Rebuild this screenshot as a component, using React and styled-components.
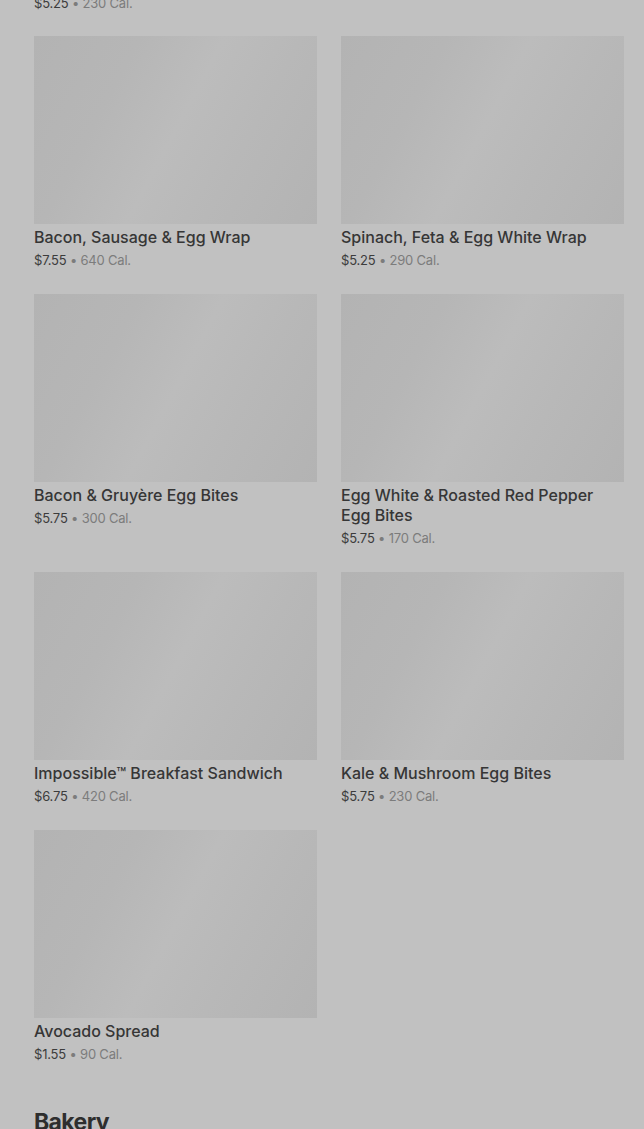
import React from "react";
import styled, { createGlobalStyle } from "styled-components";

const Global = createGlobalStyle`
  html, body { margin: 0; padding: 0; background: #c1c1c1; }
  body { font-family: Inter, "Noto Sans", sans-serif; overflow: hidden; }
`;

const Page = styled.main`
  padding: 0 20px 0 34px;
  width: 644px;
  height: 1129px;
  box-sizing: border-box;
  overflow: hidden;
`;

const Tail = styled.div`
  margin-top: -10px;
  margin-bottom: 23px;
`;

const Grid = styled.div`
  display: grid;
  grid-template-columns: 283px 283px;
  column-gap: 24px;
  row-gap: 24px;
  align-items: start;
`;

const Card = styled.article`
  display: flex;
  flex-direction: column;
`;

const Thumb = styled.div`
  height: 188px;
  background: linear-gradient(
    118deg,
    #b3b3b3 0%,
    #b6b6b6 28%,
    #bcbcbc 50%,
    #b8b8b8 70%,
    #b3b3b3 100%
  );
`;

const Title = styled.h3`
  margin: 3px 0 0;
  font-size: 16px;
  line-height: 20px;
  font-weight: 500;
  color: #363636;
`;

const Meta = styled.div`
  margin-top: 3px;
  font-size: 13px;
  line-height: 20px;
  color: #3c3c3c;
  letter-spacing: -0.2px;
`;

const Cal = styled.span`
  color: #7c7c7c;
`;

const Heading = styled.h2`
  margin: 42px 0 0;
  font-size: 23px;
  line-height: 32px;
  font-weight: 700;
  color: #2e2e2e;
  letter-spacing: -0.6px;
`;

const items = [
  { name: "Bacon, Sausage & Egg Wrap", price: "$7.55", cal: "640 Cal." },
  { name: "Spinach, Feta & Egg White Wrap", price: "$5.25", cal: "290 Cal." },
  { name: "Bacon & Gruyère Egg Bites", price: "$5.75", cal: "300 Cal." },
  { name: "Egg White & Roasted Red Pepper Egg Bites", price: "$5.75", cal: "170 Cal." },
  { name: "Impossible™ Breakfast Sandwich", price: "$6.75", cal: "420 Cal." },
  { name: "Kale & Mushroom Egg Bites", price: "$5.75", cal: "230 Cal." },
  { name: "Avocado Spread", price: "$1.55", cal: "90 Cal." },
];

const PriceLine = ({ price, cal }) => (
  <Meta>
    {price} <Cal>• {cal}</Cal>
  </Meta>
);

export default function App() {
  return (
    <>
      <Global />
      <Page>
        <Tail>
          <PriceLine price="$5.25" cal="230 Cal." />
        </Tail>
        <Grid>
          {items.map((it) => (
            <Card key={it.name}>
              <Thumb />
              <Title>{it.name}</Title>
              <PriceLine price={it.price} cal={it.cal} />
            </Card>
          ))}
        </Grid>
        <Heading>Bakery</Heading>
      </Page>
    </>
  );
}
